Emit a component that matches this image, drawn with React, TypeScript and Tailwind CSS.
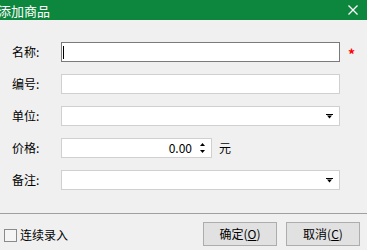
import { FC } from "react";

const font = { fontFamily: '"Noto Sans CJK SC", "Microsoft YaHei", sans-serif' };

const DropArrow: FC = () => (
    <svg width="7" height="5" viewBox="0 0 7 5" className="absolute right-[6px] top-[7px]">
        <rect x="0" y="0" width="7" height="1" fill="#000" />
        <path d="M1 1.5 L6 1.5 L3.5 4.5 Z" fill="#000" />
    </svg>
);

const Row: FC<{ label: string; children: React.ReactNode }> = ({ label, children }) => (
    <div className="flex items-center h-[20px]">
        <div className="w-[61px] shrink-0 pl-[12px] text-[12px] text-black leading-none">{label}</div>
        {children}
    </div>
);

const Btn: FC<{ text: string; hot: string }> = ({ text, hot }) => (
    <div className="w-[74px] h-[24px] border border-[#adadad] bg-[#e1e1e1] flex items-center justify-center text-[12px] text-black">
        {text}(<span className="underline">{hot}</span>)
    </div>
);

const App: FC = () => {
    return <div className="w-[367px] h-[250px] bg-[#f0f0f0] flex flex-col overflow-hidden" style={font}>
        <div className="h-[20px] bg-[#0e873e] flex items-center justify-between shrink-0">
            <span className="text-white text-[13px] ml-[-2px] leading-none">添加商品</span>
            <svg width="10" height="10" viewBox="0 0 10 10" className="mr-[9px]">
                <path d="M0.5 0.5 L9.5 9.5 M9.5 0.5 L0.5 9.5" stroke="#fff" strokeWidth="1.3" />
            </svg>
        </div>

        <div className="flex flex-col gap-[12px] pt-[22px]">
            <Row label="名称:">
                <div className="w-[279px] h-[20px] border border-[#7a7a7a] bg-white flex items-center">
                    <div className="ml-[1px] w-[1px] h-[13px] bg-black" />
                </div>
                <span className="ml-[8px] text-[#ff0000] text-[14px] font-bold leading-none mt-[4px]">*</span>
            </Row>
            <Row label="编号:">
                <div className="w-[279px] h-[20px] border border-[#d0d0d0] bg-white" />
            </Row>
            <Row label="单位:">
                <div className="relative w-[279px] h-[20px] border border-[#d0d0d0] bg-white">
                    <DropArrow />
                </div>
            </Row>
            <Row label="价格:">
                <div className="w-[151px] h-[20px] border border-[#d0d0d0] bg-white flex items-center justify-end">
                    <span className="text-[12px] text-black leading-none">0.00</span>
                    <svg width="5" height="12" viewBox="0 0 5 12" className="ml-[8px] mr-[6px]">
                        <path d="M0 4 L5 4 L2.5 1 Z" fill="#000" />
                        <path d="M0 8 L5 8 L2.5 11 Z" fill="#000" />
                    </svg>
                </div>
                <span className="ml-[7px] text-[12px] text-black leading-none">元</span>
            </Row>
            <Row label="备注:">
                <div className="relative w-[279px] h-[20px] border border-[#d0d0d0] bg-white">
                    <DropArrow />
                </div>
            </Row>
        </div>

        <div className="mt-[23px] h-px bg-[#a0a0a0]" />

        <div className="flex items-center justify-between pt-[8px] pr-[7px]">
            <div className="flex items-center pl-[4px] mt-[2px]">
                <div className="w-[13px] h-[13px] border border-[#8a8a8a] bg-[#f5f5f5]" />
                <span className="ml-[3px] text-[12px] text-black leading-none">连续录入</span>
            </div>
            <div className="flex gap-[9px]">
                <Btn text="确定" hot="O" />
                <Btn text="取消" hot="C" />
            </div>
        </div>
    </div>
}

export default App
